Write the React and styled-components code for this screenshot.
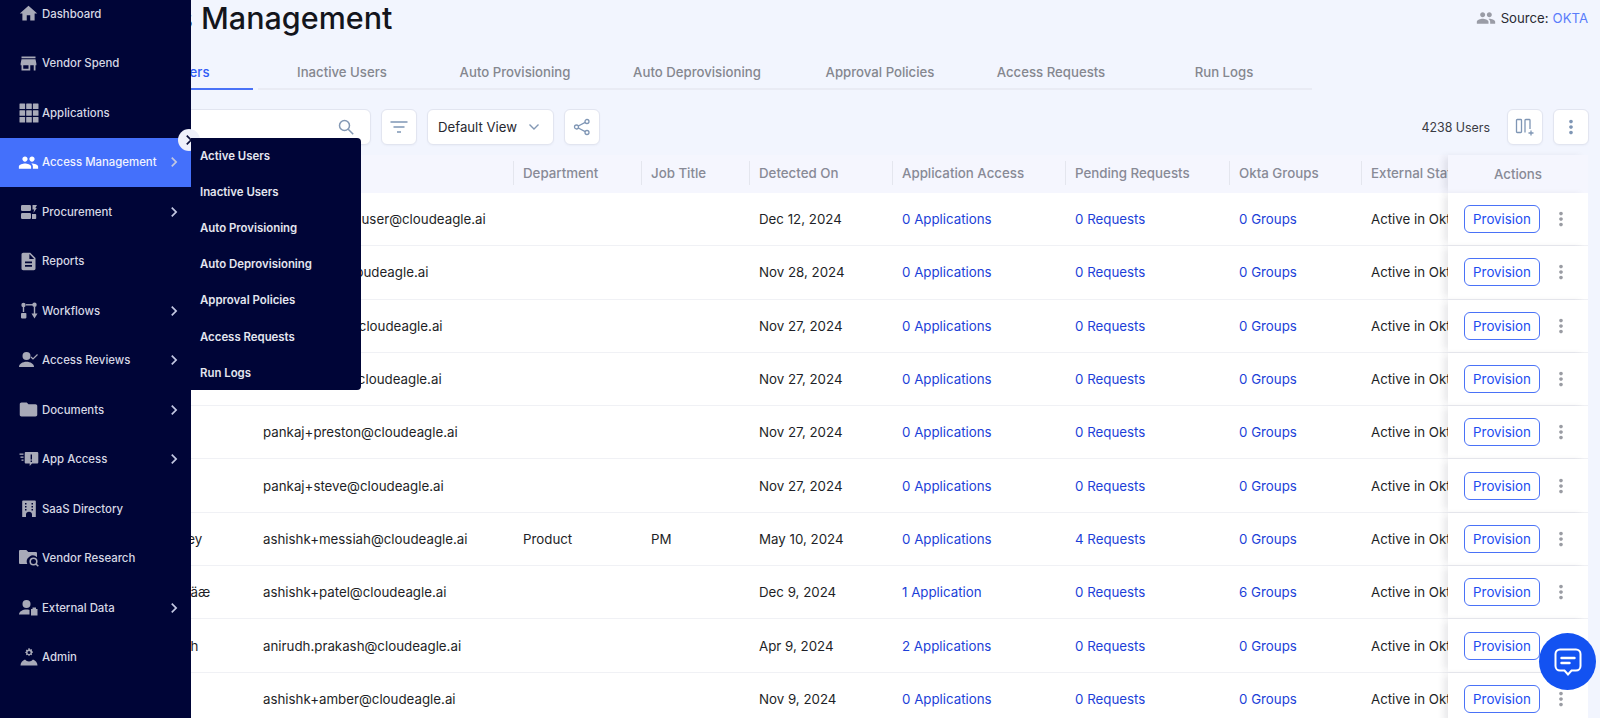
import React from 'react';
import styled, { createGlobalStyle } from 'styled-components';
import { MdHome, MdStore, MdPeople, MdDescription, MdFolder, MdChevronRight, MdMoreVert } from 'react-icons/md';

const GlobalStyle = createGlobalStyle`
  html, body { margin: 0; height: 100%; overflow: hidden; }
  body { font-family: Inter, "Noto Sans", sans-serif; background: #f2f5fe; color: #1a1b22; }
  #root { height: 100%; }
  * { box-sizing: border-box; }
`;

// custom icons, the ones no package has
const GridIcon = () => (
  <svg width="20" height="20" viewBox="0 0 20 20" fill="currentColor">
    {[0.5, 7.2, 13.9].map(y => [0.5, 7.2, 13.9].map(x => <rect key={x + '-' + y} x={x} y={y} width="5.6" height="5.6" rx="0.5" />))}
  </svg>
);
const ProcurementIcon = () => (
  <svg width="18" height="18" viewBox="0 0 18 18" fill="currentColor">
    <rect x="1" y="2" width="10" height="6" rx="1.2" />
    <path d="M12.5 2H17l-1.6 3h1.4l-3.4 5 .7-3.4h-1.6z" />
    <rect x="1" y="10" width="10" height="6" rx="1.2" />
    <path d="M12 11h3.2c.7 0 1 .4 1 1v3c0 .6-.4 1-1 1H12z" />
  </svg>
);
const WorkflowIcon = () => (
  <svg width="18" height="18" viewBox="0 0 18 18" fill="currentColor">
    <circle cx="3.5" cy="3" r="2.2" />
    <rect x="2.8" y="5" width="1.4" height="5" />
    <rect x="1" y="11" width="5.4" height="5.4" rx="0.8" />
    <circle cx="14.5" cy="2.8" r="2.2" />
    <rect x="6" y="2.1" width="7" height="1.4" />
    <rect x="13.800" y="5" width="1.4" height="7" />
    <path d="M11.500 11.500h6L14.500 16.500z" />
  </svg>
);
const ReviewIcon = () => (
  <svg width="20" height="18" viewBox="0 0 20 18" fill="currentColor">
    <circle cx="7.5" cy="5" r="4" />
    <path d="M0 16c0-3 3.600-5.200 7.500-5.200S15 13 15 16z" />
    <path d="M12 6l2 2 4.500-4.500" fill="none" stroke="currentColor" strokeWidth="1.2" />
  </svg>
);
const AppAccessIcon = () => (
  <svg width="20" height="18" viewBox="0 0 20 18" fill="currentColor">
    <rect x="0.500" y="3.500" width="4" height="1.300" />
    <rect x="1.500" y="6.500" width="3" height="1.300" />
    <rect x="2.500" y="9.500" width="2" height="1.300" />
    <path fillRule="evenodd" d="M7 2h11c.8 0 1.300.5 1.300 1.300v9c0 .8-.5 1.200-1.300 1.200h-5l-2.300 2.500v-2.500H7c-.8 0-1.300-.4-1.300-1.200v-9C5.700 2.500 6.200 2 7 2zm4.600 2.500v5h1.400v-5zm0 6v1.500h1.400v-1.500z" />
  </svg>
);
const DirectoryIcon = () => (
  <svg width="18" height="18" viewBox="0 0 18 18" fill="currentColor">
    <path fillRule="evenodd" d="M3 0.500h12c.5 0 .8.300.8.800V17H12v-2.500c0-1.600-1.300-2.700-3-2.700s-3 1.100-3 2.700V17H2.200V1.300c0-.5.300-.8.800-.8zM5 3v1.500h1.500V3zm0 3v1.500h1.500V6zm0 3v1.500h1.500V9zm6.500-6v1.500H13V3zm0 3v1.500H13V6zm0 3v1.500H13V9z" />
  </svg>
);
const ResearchIcon = () => (
  <svg width="20" height="19" viewBox="0 0 20 19" fill="currentColor">
    <path d="M1.300 1h6l2 2h7.400c.8 0 1.300.5 1.300 1.300v4a6 6 0 0 0-9.700 6.700H1.300C.5 15 0 14.500 0 13.700V2.300C0 1.500.5 1 1.300 1z" />
    <circle cx="14.500" cy="12.500" r="3.300" fill="none" stroke="currentColor" strokeWidth="1.600" />
    <path d="M17 15l2.300 2.300" stroke="currentColor" strokeWidth="1.600" />
  </svg>
);
const ExternalIcon = () => (
  <svg width="20" height="18" viewBox="0 0 20 18" fill="currentColor">
    <circle cx="7.500" cy="5" r="4" />
    <path d="M0 15.500c0-3 3.600-5 7.500-5 1 0 2 .1 3 .4v4.600z" />
    <path fillRule="evenodd" d="M12 10h6.500v6.500H12zM13.500 8.500h3.500V10h-3.500z" />
  </svg>
);
const AdminIcon = () => (
  <svg width="18" height="18" viewBox="0 0 18 18" fill="currentColor">
    <path transform="translate(3 0) scale(0.67)" fillRule="evenodd" d="M8 .5h2l.3 1.200 1 .4 1.100-.6 1.300 1.400-.6 1 .4 1 1.200.3v1.900l-1.200.3-.4 1 .6 1-1.300 1.400-1.100-.6-1 .4-.3 1.100H8l-.3-1.100-1-.4-1.100.6-1.300-1.400.6-1-.4-1-1.200-.3V6l1.200-.3.4-1-.6-1 1.300-1.400 1.100.6 1-.4zM9 4.500a2.300 2.300 0 1 0 0 4.600 2.300 2.300 0 0 0 0-4.600z" />
    <path d="M0.500 17.500c0-3 2-5 4.500-6 1 1.300 2.500 2 4 2s3-.7 4-2c2.500 1 4.500 3 4.500 6z" />
  </svg>
);
const ColumnsIcon = () => (
  <svg width="20" height="20" viewBox="0 0 20 20" fill="none" stroke="currentColor" strokeWidth="1.300">
    <rect x="1.500" y="2.500" width="5" height="13" rx="0.800" />
    <path d="M10 15.500V3.300c0-.5.300-.8.800-.8h3.400c.5 0 .8.300.8.800V12" />
    <path d="M16 13.500v5M13.500 16h5" />
  </svg>
);
const FilterIcon = () => (
  <svg width="20" height="20" viewBox="0 0 20 20" fill="none" stroke="currentColor" strokeWidth="1.500">
    <path d="M1.500 5h17M4.500 10h11M8 15h4" />
  </svg>
);
const SearchIcon = () => (
  <svg width="18" height="18" viewBox="0 0 18 18" fill="none" stroke="currentColor" strokeWidth="1.500">
    <circle cx="7.500" cy="7.500" r="5" />
    <path d="M11.200 11.200l5 5" />
  </svg>
);
const ShareIcon = () => (
  <svg width="18" height="18" viewBox="0 0 18 18" fill="none" stroke="currentColor" strokeWidth="1.300">
    <circle cx="14" cy="3.500" r="2" />
    <circle cx="3.500" cy="9" r="2" />
    <circle cx="14" cy="14.500" r="2" />
    <path d="M5.300 8l6.900-3.600M5.300 10l6.900 3.600" />
  </svg>
);
const CaretIcon = () => (
  <svg width="12" height="8" viewBox="0 0 12 8" fill="none" stroke="currentColor" strokeWidth="1.400">
    <path d="M1.500 1.500L6 6l4.500-4.500" />
  </svg>
);
const ChatIcon = () => (
  <svg width="32" height="32" viewBox="0 0 32 32" fill="none" stroke="#fff" strokeWidth="2">
    <path d="M8 3.500h16c2.500 0 4.500 2 4.500 4.500v12c0 2.500-2 4.500-4.500 4.500h-4.500L16 28.500l-3.500-4H8c-2.500 0-4.500-2-4.500-4.500V8c0-2.500 2-4.500 4.500-4.500z" />
    <path d="M9.500 12h13M9.500 17h8" strokeWidth="2.400" strokeLinecap="round" />
  </svg>
);

const NAV = [
  { label: 'Dashboard', icon: <MdHome size={21} /> },
  { label: 'Vendor Spend', icon: <MdStore size={21} /> },
  { label: 'Applications', icon: <GridIcon /> },
  { label: 'Access Management', icon: <MdPeople size={21} />, more: true, active: true },
  { label: 'Procurement', icon: <ProcurementIcon />, more: true },
  { label: 'Reports', icon: <MdDescription size={21} /> },
  { label: 'Workflows', icon: <WorkflowIcon />, more: true },
  { label: 'Access Reviews', icon: <ReviewIcon />, more: true },
  { label: 'Documents', icon: <MdFolder size={21} />, more: true },
  { label: 'App Access', icon: <AppAccessIcon />, more: true },
  { label: 'SaaS Directory', icon: <DirectoryIcon /> },
  { label: 'Vendor Research', icon: <ResearchIcon /> },
  { label: 'External Data', icon: <ExternalIcon />, more: true },
  { label: 'Admin', icon: <AdminIcon /> },
];

const SUBNAV = ['Active Users', 'Inactive Users', 'Auto Provisioning', 'Auto Deprovisioning', 'Approval Policies', 'Access Requests', 'Run Logs'];

const TABS = [
  { label: 'Active Users', width: 159, active: true },
  { label: 'Inactive Users', width: 168 },
  { label: 'Auto Provisioning', width: 168 },
  { label: 'Auto Deprovisioning', width: 186 },
  { label: 'Approval Policies', width: 170 },
  { label: 'Access Requests', width: 162 },
  { label: 'Run Logs', width: 174 },
];

const HEADERS = ['Name', 'Email', 'Department', 'Job Title', 'Detected On', 'Application Access', 'Pending Requests', 'Okta Groups', 'External Status'];

const ROWS = [
  { name: 'New User', email: 'ashishk+testinguser@cloudeagle.ai', date: 'Dec 12, 2024', apps: '0 Applications', reqs: '0 Requests', groups: '0 Groups' },
  { name: 'Joy', email: 'pankaj+joy@cloudeagle.ai', date: 'Nov 28, 2024', apps: '0 Applications', reqs: '0 Requests', groups: '0 Groups' },
  { name: 'Olivia', email: 'pankaj+olivia@cloudeagle.ai', date: 'Nov 27, 2024', apps: '0 Applications', reqs: '0 Requests', groups: '0 Groups' },
  { name: 'Mark', email: 'pankaj+mark@cloudeagle.ai', date: 'Nov 27, 2024', apps: '0 Applications', reqs: '0 Requests', groups: '0 Groups' },
  { name: 'Preston', email: 'pankaj+preston@cloudeagle.ai', date: 'Nov 27, 2024', apps: '0 Applications', reqs: '0 Requests', groups: '0 Groups' },
  { name: 'Steve', email: 'pankaj+steve@cloudeagle.ai', date: 'Nov 27, 2024', apps: '0 Applications', reqs: '0 Requests', groups: '0 Groups' },
  { name: 'Messiah Downey', email: 'ashishk+messiah@cloudeagle.ai', dept: 'Product', job: 'PM', date: 'May 10, 2024', apps: '0 Applications', reqs: '4 Requests', groups: '0 Groups' },
  { name: 'Ashishk Patel áäæ', email: 'ashishk+patel@cloudeagle.ai', date: 'Dec 9, 2024', apps: '1 Application', reqs: '0 Requests', groups: '6 Groups' },
  { name: 'Anirudh Prakash', email: 'anirudh.prakash@cloudeagle.ai', date: 'Apr 9, 2024', apps: '2 Applications', reqs: '0 Requests', groups: '0 Groups' },
  { name: 'Amber', email: 'ashishk+amber@cloudeagle.ai', date: 'Nov 9, 2024', apps: '0 Applications', reqs: '0 Requests', groups: '0 Groups' },
];

function App() {
  return (
    <>
      <GlobalStyle />
      <Page>
        <Main>
          <TitleRow>
            <Title>Access Management</Title>
            <Source>
              <SourceIcon><MdPeople size={20} /></SourceIcon>
              Source: <SourceName>OKTA</SourceName>
            </Source>
          </TitleRow>

          <Tabs>
            {TABS.map(t => <Tab key={t.label} $width={t.width} $active={t.active}>{t.label}</Tab>)}
          </Tabs>

          <Toolbar>
            <Search><SearchIcon /></Search>
            <ToolButton><FilterIcon /></ToolButton>
            <ViewSelect>Default View <CaretIcon /></ViewSelect>
            <ToolButton><ShareIcon /></ToolButton>
            <UserCount>4238 Users</UserCount>
            <ToolButton><ColumnsIcon /></ToolButton>
            <ToolButton><MdMoreVert size={22} /></ToolButton>
          </Toolbar>

          <Table>
            <HeadRow>
              {HEADERS.map(h => <HeadCell key={h}>{h}</HeadCell>)}
              <ActionsHead>Actions</ActionsHead>
            </HeadRow>
            {ROWS.map(r => (
              <Row key={r.email}>
                <NameCell>{r.name}</NameCell>
                <Cell>{r.email}</Cell>
                <Cell>{r.dept}</Cell>
                <Cell>{r.job}</Cell>
                <Cell>{r.date}</Cell>
                <LinkCell>{r.apps}</LinkCell>
                <LinkCell>{r.reqs}</LinkCell>
                <LinkCell>{r.groups}</LinkCell>
                <Cell>Active in Okta</Cell>
                <ActionsCell>
                  <ProvisionButton>Provision</ProvisionButton>
                  <RowMenu><MdMoreVert size={22} /></RowMenu>
                </ActionsCell>
              </Row>
            ))}
          </Table>
        </Main>

        <Sidebar>
          {NAV.map(n => (
            <NavItem key={n.label} $active={n.active}>
              <NavIcon $active={n.active}>{n.icon}</NavIcon>
              <NavLabel>{n.label}</NavLabel>
              {n.more && <NavChevron><MdChevronRight size={20} /></NavChevron>}
            </NavItem>
          ))}
        </Sidebar>

        <CollapseToggle><MdChevronRight size={20} /></CollapseToggle>
        <Flyout>
          {SUBNAV.map(s => <FlyoutItem key={s}>{s}</FlyoutItem>)}
        </Flyout>

        <ChatButton><ChatIcon /></ChatButton>
      </Page>
    </>
  );
}

// page

const Page = styled.div`
  position: relative;
  height: 718px;
  overflow: hidden;
`;

const Main = styled.main`
  padding: 0 12px 0 94px;
`;

const TitleRow = styled.div`
  display: flex;
  align-items: center;
  justify-content: space-between;
  height: 35px;
`;

const Title = styled.h1`
  margin: 0 0 0 -8.5px;
  font-size: 30.5px;
  line-height: 35px;
  font-weight: 500;
  color: #14151c;
  white-space: nowrap;
`;

const Source = styled.div`
  display: flex;
  align-items: center;
  gap: 4px;
  font-size: 13.2px;
  color: #2a2b33;
`;

const SourceIcon = styled.span`
  display: flex;
  margin-right: 1px;
  color: #9a9ca6;
`;

const SourceName = styled.span`
  color: #5a7dfb;
`;

// tabs

const Tabs = styled.div`
  display: flex;
  gap: 5px;
  width: 1218px;
  margin-top: 20px;
  border-bottom: 2px solid #e9ebf4;
`;

const Tab = styled.div`
  width: ${p => p.$width}px;
  height: 35px;
  margin-bottom: -2px;
  display: flex;
  align-items: center;
  justify-content: center;
  padding-top: 1px;
  padding-right: ${p => (p.$active ? '8px' : '0')};
  font-size: 13.2px;
  font-weight: 500;
  color: ${p => (p.$active ? '#2f5cf5' : '#85878f')};
  border-bottom: 2px solid ${p => (p.$active ? '#4a72f7' : 'transparent')};
  box-shadow: ${p => (p.$active ? '5px 0 0 #f2f5fe' : 'none')};
`;

// toolbar

const Toolbar = styled.div`
  display: flex;
  align-items: center;
  gap: 10px;
  margin: 19px -1px 0 0;
  height: 36px;
`;

const boxStyles = `
  height: 36px;
  display: flex;
  align-items: center;
  background: #fff;
  border: 1px solid #e2e5f0;
  border-radius: 6px;
  box-shadow: 0 1px 2px rgba(30, 40, 90, 0.04);
`;

const Search = styled.div`
  ${boxStyles}
  width: 277px;
  justify-content: flex-end;
  padding-right: 15px;
  color: #8398b4;
`;

const ToolButton = styled.div`
  ${boxStyles}
  width: 36px;
  justify-content: center;
  color: #7f96b5;
`;

const ViewSelect = styled.div`
  ${boxStyles}
  width: 127px;
  justify-content: space-between;
  padding: 0 13px 0 10px;
  font-size: 13.2px;
  color: #26272f;

  svg {
    color: #8398b4;
  }
`;

const UserCount = styled.div`
  margin-left: auto;
  margin-right: 7px;
  font-size: 12.4px;
  color: #3a3b44;
`;

// table

const COLUMNS = '159px 260px 128px 108px 143px 173px 164px 132px 87px 140px';

const Table = styled.div`
  margin-top: 10px;
`;

const HeadRow = styled.div`
  display: grid;
  grid-template-columns: ${COLUMNS};
  height: 38px;
  background: #f5f6fe;
`;

const HeadCell = styled.div`
  display: flex;
  align-items: center;
  height: 24px;
  margin-top: 6px;
  padding-left: 9px;
  border-left: 1px solid #e4e6ee;
  font-size: 13.3px;
  font-weight: 500;
  color: #888a96;
  white-space: nowrap;
  overflow: hidden;
`;

const ActionsHead = styled.div`
  display: flex;
  align-items: center;
  justify-content: center;
  font-size: 13.3px;
  font-weight: 500;
  color: #888a96;
  background: #f5f6fe;
  box-shadow: -6px 0 7px -2px rgba(30, 30, 50, 0.1);
`;

const Row = styled.div`
  display: grid;
  grid-template-columns: ${COLUMNS};
  height: 53.3px;
  background: #fff;
  border-bottom: 1px solid #f0f1f5;
`;

const Cell = styled.div`
  display: flex;
  align-items: center;
  padding-left: 10px;
  font-size: 13.3px;
  color: #1e1f27;
  white-space: nowrap;
  overflow: hidden;
`;

const NameCell = styled(Cell)`
  padding-left: 1px;
`;

const LinkCell = styled(Cell)`
  color: #1c3fd8;
`;

const ActionsCell = styled.div`
  display: flex;
  align-items: center;
  padding-left: 16px;
  gap: 10px;
  background: #fff;
  box-shadow: -6px 0 7px -2px rgba(30, 30, 50, 0.1);
`;

const ProvisionButton = styled.button`
  width: 76px;
  height: 28px;
  padding: 0;
  background: #fff;
  border: 1px solid #4a72f7;
  border-radius: 6px;
  font-family: inherit;
  font-size: 13.3px;
  color: #1c4cf0;
`;

const RowMenu = styled.span`
  display: flex;
  color: #9a9ca3;
`;

// sidebar, it opens over the page

const Sidebar = styled.nav`
  position: absolute;
  top: 0;
  left: 0;
  bottom: 0;
  width: 191px;
  background: #000537;
  overflow: hidden;
`;

const NavItem = styled.div`
  display: flex;
  align-items: center;
  height: 49.5px;
  padding: 0 7px 0 18px;
  background: ${p => (p.$active ? '#4470fb' : 'transparent')};
  color: ${p => (p.$active ? '#f1f3ff' : '#d6d8e4')};

  &:first-child {
    margin-top: -11px;
  }
`;

const NavIcon = styled.span`
  display: flex;
  justify-content: center;
  width: 21px;
  margin-right: 3px;
  color: ${p => (p.$active ? '#fff' : '#a8aab8')};
`;

const NavLabel = styled.span`
  flex: 1;
  font-size: 11.4px;
  font-weight: 500;
  white-space: nowrap;
`;

const NavChevron = styled.span`
  display: flex;
  color: #c2c7e2;
`;

const CollapseToggle = styled.div`
  position: absolute;
  top: 129px;
  left: 178px;
  width: 22px;
  height: 22px;
  display: flex;
  align-items: center;
  justify-content: center;
  background: #eef0fa;
  border-radius: 50%;
  color: #0a0e3a;
`;

const Flyout = styled.div`
  position: absolute;
  top: 138px;
  left: 191px;
  width: 170px;
  height: 252px;
  background: #000537;
  border-radius: 0 4px 4px 0;
`;

const FlyoutItem = styled.div`
  display: flex;
  align-items: center;
  height: 36.2px;
  padding: 0 0 1px 9px;
  font-size: 11.4px;
  font-weight: 600;
  color: #e4e6ef;
`;

const ChatButton = styled.div`
  position: absolute;
  left: 1539px;
  top: 633px;
  width: 57px;
  height: 57px;
  display: flex;
  align-items: center;
  justify-content: center;
  background: #1352f1;
  border-radius: 50%;
`;

export default App;
